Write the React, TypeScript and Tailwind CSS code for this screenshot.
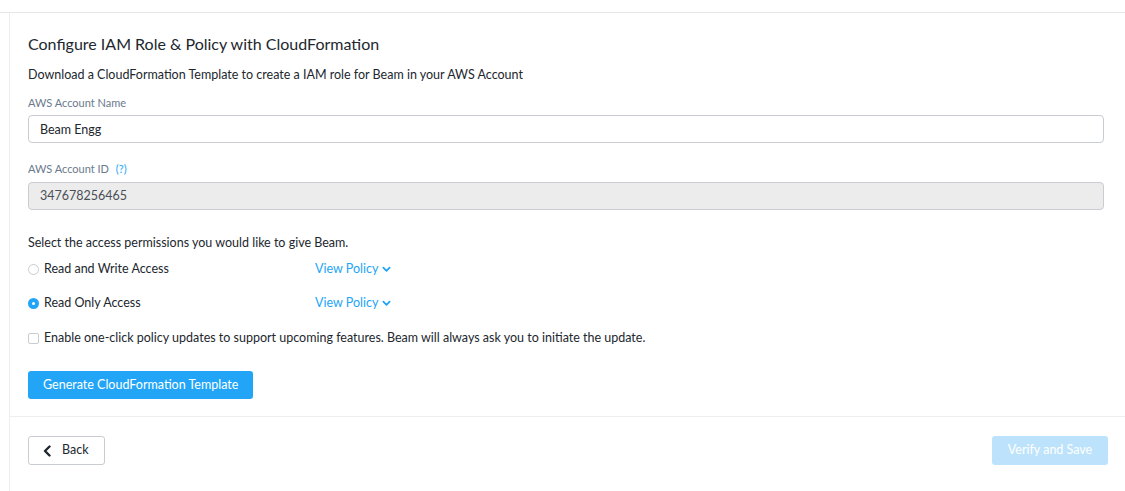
import React, { useState } from 'react';

const font = { fontFamily: 'Lato, "Open Sans", sans-serif' };

const Chevron = () => (
  <svg width="9" height="9" viewBox="0 0 10 10" className="ml-1">
    <path d="M1.5 3 L5 6.5 L8.5 3" fill="none" stroke="currentColor" strokeWidth="2" strokeLinecap="round" strokeLinejoin="round" />
  </svg>
);

const App: React.FC = () => {
  const [access, setAccess] = useState('read');
  const [oneClick, setOneClick] = useState(false);

  const options = [
    { id: 'rw', label: 'Read and Write Access' },
    { id: 'read', label: 'Read Only Access' },
  ];

  return (
    <div className="w-[1125px] h-[491px] bg-white text-[#22272e] overflow-hidden" style={font}>
      <div className="mt-3 border-t border-[#e6e8eb] h-full">
        <div className="ml-[9px] border-l border-[#eceef0] h-full">
          <div className="pl-[18px] pr-[21px] pt-[20px]">
            <h2 className="text-[16px] leading-[22px] text-[#22272e]">Configure IAM Role &amp; Policy with CloudFormation</h2>
            <p className="mt-[12px] text-[12.5px] leading-[16px]">
              Download a CloudFormation Template to create a IAM role for Beam in your AWS Account
            </p>

            <label className="block mt-[13px] text-[11px] leading-[14px] text-[#6a7a8c]">AWS Account Name</label>
            <input
              defaultValue="Beam Engg"
              className="mt-[5px] block w-full h-[28px] px-[11px] text-[12.5px] text-[#22272e] border border-[#c9ccd0] rounded-[4px] outline-none"
            />

            <label className="block mt-[19px] text-[11px] leading-[14px] text-[#6a7a8c]">
              AWS Account ID <span className="ml-1 text-[#22a5f7]">(?)</span>
            </label>
            <div className="mt-[6px] h-[28px] px-[11px] flex items-center text-[12.5px] text-[#4a4f55] bg-[#ececec] border border-[#c9ccd0] rounded-[4px]">
              347678256465
            </div>

            <p className="mt-[25px] text-[12.5px] leading-[16px]">Select the access permissions you would like to give Beam.</p>

            <div className="mt-[10px] flex flex-col gap-[18px]">
              {options.map((o) => (
                <div key={o.id} className="flex items-center h-[16px]">
                  <button onClick={() => setAccess(o.id)} className="flex items-center w-[287px] text-[12.5px]">
                    {access === o.id ? (
                      <span className="w-[11px] h-[11px] rounded-full bg-[#22a5f7] flex items-center justify-center">
                        <span className="w-[3px] h-[3px] rounded-full bg-white" />
                      </span>
                    ) : (
                      <span className="w-[11px] h-[11px] rounded-full border border-[#c9ccd0] bg-white" />
                    )}
                    <span className="ml-[5px]">{o.label}</span>
                  </button>
                  <span className="flex items-center text-[12.5px] text-[#22a5f7]">
                    View Policy
                    <Chevron />
                  </span>
                </div>
              ))}
            </div>

            <button onClick={() => setOneClick(!oneClick)} className="mt-[19px] flex items-center h-[16px] text-[12.5px]">
              <span className={`w-[11px] h-[11px] rounded-[2px] border ${oneClick ? 'bg-[#22a5f7] border-[#22a5f7]' : 'border-[#c9ccd0] bg-white'}`} />
              <span className="ml-[5px]">
                Enable one-click policy updates to support upcoming features. Beam will always ask you to initiate the update.
              </span>
            </button>

            <button className="mt-[25px] h-[28px] px-[15px] rounded-[3px] bg-[#22a5f7] text-white text-[12.5px]">
              Generate CloudFormation Template
            </button>
          </div>

          <div className="mt-[17px] border-t border-[#eceef0] pl-[18px] pr-[17px] pt-[19px] flex justify-between">
            <button className="h-[29px] w-[77px] flex items-center pl-[14px] gap-[10px] rounded-[3px] border border-[#c9ccd0] text-[12.5px] text-[#22272e]">
              <svg width="9" height="12" viewBox="0 0 9 12">
                <path d="M6.5 1.5 L2 6 L6.5 10.5" fill="none" stroke="#22272e" strokeWidth="2.4" strokeLinecap="round" strokeLinejoin="round" />
              </svg>
              Back
            </button>
            <button disabled className="h-[29px] w-[116px] rounded-[3px] bg-[#bde3fc] text-white text-[12.5px]">
              Verify and Save
            </button>
          </div>
        </div>
      </div>
    </div>
  );
};

export default App;
